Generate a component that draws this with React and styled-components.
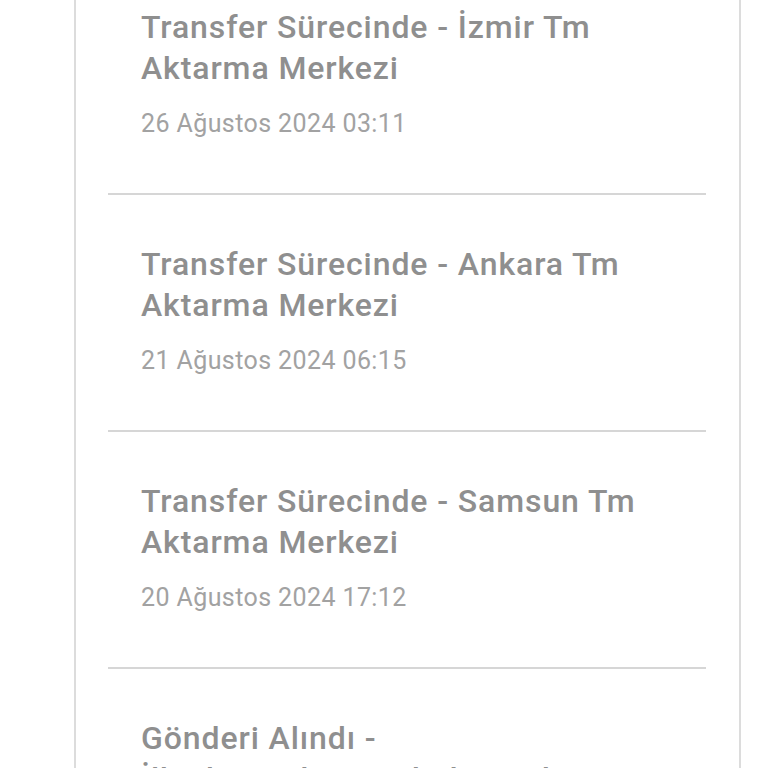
import React from 'react';
import styled, { createGlobalStyle } from 'styled-components';

const GlobalStyle = createGlobalStyle`
  html, body {
    margin: 0;
    padding: 0;
    background: #ffffff;
    overflow: hidden;
    height: 768px;
  }
`;

const Page = styled.div`
  height: 768px;
  overflow: hidden;
  padding: 0 27px 0 74px;
  font-family: Roboto, "Noto Sans", sans-serif;
`;

const Card = styled.div`
  margin-top: -44px;
  border-left: 2px solid #dcdcdc;
  border-right: 2px solid #dcdcdc;
  padding: 0 33px 0 32px;
`;

const Item = styled.div`
  border-top: 2px solid #d6d6d6;
  padding: 49px 0 52px 33px;
`;

const Title = styled.div`
  font-size: 32px;
  line-height: 41px;
  font-weight: 500;
  letter-spacing: 0.9px;
  color: #8f8f8f;
  white-space: pre-line;
`;

const Date = styled.div`
  margin-top: 18px;
  font-size: 25px;
  line-height: 34px;
  letter-spacing: 0.4px;
  color: #a2a2a2;
`;

const events = [
  { title: 'Transfer Sürecinde - İzmir Tm Aktarma Merkezi', date: '26 Ağustos 2024 03:11' },
  { title: 'Transfer Sürecinde - Ankara Tm Aktarma Merkezi', date: '21 Ağustos 2024 06:15' },
  { title: 'Transfer Sürecinde - Samsun Tm Aktarma Merkezi', date: '20 Ağustos 2024 17:12' },
  { title: 'Gönderi Alındı -\nİlkadım Şubesi Kabul - Teslim Noktası', date: '19 Ağustos 2024 14:40' },
];

export default function App() {
  return (
    <Page>
      <GlobalStyle />
      <Card>
        {events.map((e, i) => (
          <Item key={e.date + '-' + i}>
            <Title>{e.title}</Title>
            <Date>{e.date}</Date>
          </Item>
        ))}
      </Card>
    </Page>
  );
}
